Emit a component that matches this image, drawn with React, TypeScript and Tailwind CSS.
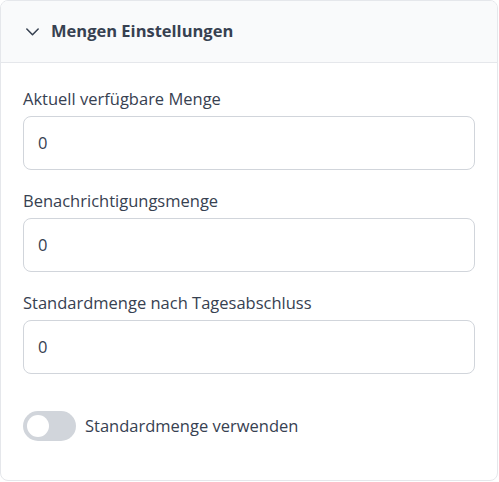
import React from "react";

function Field({ label }: { label: string }) {
  return (
    <div className="flex flex-col">
      <label className="text-[16.5px] leading-6 text-[#374151] mb-[5px]">{label}</label>
      <div className="h-[54px] rounded-lg border border-[#d1d5db] bg-white flex items-center px-[14px] text-[16.5px] text-[#374151]">
        0
      </div>
    </div>
  );
}

export default function App() {
  return (
    <div className="w-[499px] h-[482px] bg-white" style={{ fontFamily: '"Open Sans", sans-serif' }}>
      <div className="w-[498px] h-[481px] rounded-lg border border-[#e5e7eb] overflow-hidden flex flex-col">
        <div className="h-[62px] shrink-0 bg-[#f9fafb] border-b border-[#e5e7eb] flex items-center pl-[23px] gap-[10px]">
          <svg width="17" height="17" viewBox="0 0 24 24" fill="none" stroke="#374151" strokeWidth="2.2" strokeLinecap="round" strokeLinejoin="round">
            <path d="M4 8.5l8 8 8-8" />
          </svg>
          <span className="text-[16.5px] font-bold text-[#374151]">Mengen Einstellungen</span>
        </div>
        <div className="px-[22px] pt-[24px] flex flex-col gap-[19px]">
          <Field label="Aktuell verfügbare Menge" />
          <Field label="Benachrichtigungsmenge" />
          <Field label="Standardmenge nach Tagesabschluss" />
          <div className="flex items-center gap-[9px] mt-[18px]">
            <div className="w-[53px] h-[30px] rounded-full bg-[#d1d5db] flex items-center px-[4px]">
              <div className="w-[22px] h-[22px] rounded-full bg-white" />
            </div>
            <span className="text-[16.5px] text-[#374151]">Standardmenge verwenden</span>
          </div>
        </div>
      </div>
    </div>
  );
}
